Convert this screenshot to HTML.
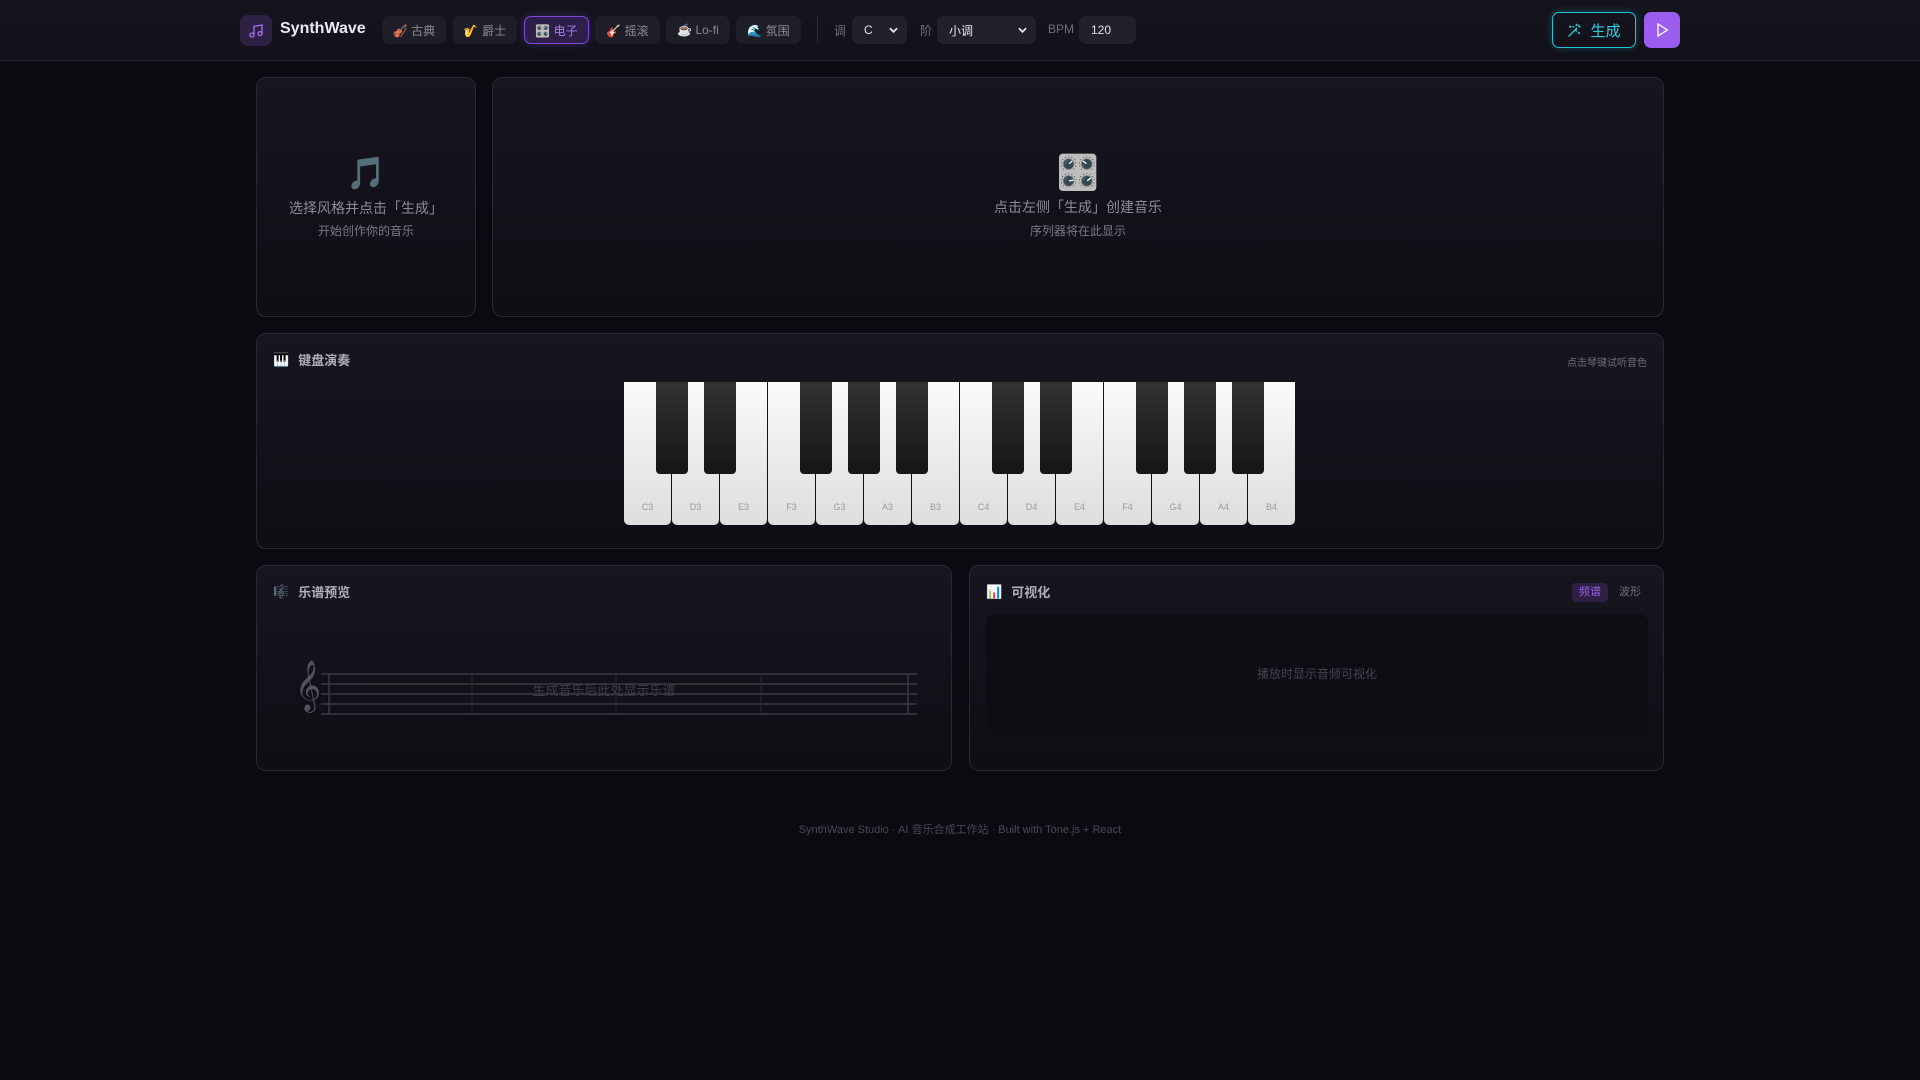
<!DOCTYPE html>
<html><head><meta charset="utf-8"><style>
*{box-sizing:border-box;margin:0;padding:0}
body{width:1920px;height:1080px;background:#0b0a10;font-family:"Liberation Sans","Noto Sans CJK SC",sans-serif;color:#9a98a8;position:relative;overflow:hidden}
.hdr{position:absolute;left:0;top:0;width:1920px;height:61px;background:linear-gradient(#16141e,#121019);border-bottom:1px solid #25232e}
.abs{position:absolute}
.logo{left:240px;top:15px;width:32px;height:31px;border-radius:8px;background:#2c2143;display:flex;align-items:center;justify-content:center}
.title{left:280px;top:20px;font-size:16px;font-weight:bold;color:#ecebf2}
.sb{top:16px;height:28px;border-radius:7px;background:#1f1d28;font-size:12px;display:flex;align-items:center;justify-content:center;color:#8b8998;gap:4px}
.sb.on{background:#2d1f4a;border:1px solid #7c4ad6;color:#a77cf2;box-shadow:0 0 8px rgba(124,74,214,.35)}
.lbl{top:22px;font-size:12px;color:#6f6d7c}
.sel{top:16px;height:28px;border-radius:7px;background:#22202b;font-size:12px;color:#e4e3ea;padding-left:12px;display:flex;align-items:center}
.chev{position:absolute;right:9px;top:10px}
.card{position:absolute;border:1px solid #2a2833;border-radius:10px;background:linear-gradient(#17151f,#0f0e14)}
.ct{position:absolute;left:16px;top:16px;font-size:13px;font-weight:bold;color:#b1afbd;display:flex;align-items:center;gap:9px}
.wk{position:absolute;top:0;width:47px;height:143px;background:linear-gradient(#fafafa,#dedede);border-radius:0 0 5px 5px;font-size:9px;color:#9a9aa2;text-align:center;padding-top:120px}
.bk{position:absolute;top:0;width:32px;height:92px;background:linear-gradient(#333,#151515);border-radius:0 0 4px 4px}
</style></head><body>
<div class="hdr">
<div class="abs logo"><svg width="16" height="16" viewBox="0 0 24 24" fill="none" stroke="#a56ef0" stroke-width="2" stroke-linecap="round"><path d="M9 18V5l12-2v13"/><circle cx="6" cy="18" r="3"/><circle cx="18" cy="16" r="3"/></svg></div>
<div class="abs title">SynthWave</div>
<div class="abs sb" style="left:382px;width:64px">🎻 古典</div>
<div class="abs sb" style="left:453px;width:64px">🎷 爵士</div>
<div class="abs sb on" style="left:524px;width:65px">🎛️ 电子</div>
<div class="abs sb" style="left:595px;width:65px">🎸 摇滚</div>
<div class="abs sb" style="left:666px;width:64px">☕ Lo-fi</div>
<div class="abs sb" style="left:736px;width:65px">🌊 氛围</div>
<div class="abs" style="left:817px;top:17px;width:1px;height:26px;background:#2c2a35"></div>
<div class="abs lbl" style="left:834px">调</div>
<div class="abs sel" style="left:852px;width:55px">C<svg class="chev" width="9" height="8" viewBox="0 0 10 8"><path d="M1 2l4 4 4-4" fill="none" stroke="#e4e3ea" stroke-width="2"/></svg></div>
<div class="abs lbl" style="left:920px">阶</div>
<div class="abs sel" style="left:937px;width:99px">小调<svg class="chev" width="9" height="8" viewBox="0 0 10 8"><path d="M1 2l4 4 4-4" fill="none" stroke="#e4e3ea" stroke-width="2"/></svg></div>
<div class="abs lbl" style="left:1048px">BPM</div>
<div class="abs sel" style="left:1079px;width:57px">120</div>
<div class="abs" style="left:1552px;top:12px;width:84px;height:36px;border:1.5px solid #1fc6d8;border-radius:7px;color:#2ad0e0;font-size:15px;display:flex;align-items:center;justify-content:center;gap:8px;box-shadow:0 0 8px rgba(31,198,216,.3)"><svg width="15" height="15" viewBox="0 0 24 24" fill="none" stroke="#2ad0e0" stroke-width="2" stroke-linecap="round"><path d="M3 21L15 9M13 11l2 2"/><path d="M15 4V2M15 10V8M11 6H9M21 6h-2M19 3l-1 1M5 7V5M4 6h2M19 17v-2M18 16h2"/></svg>生成</div>
<div class="abs" style="left:1644px;top:12px;width:36px;height:36px;background:#9b5cf0;border-radius:7px;display:flex;align-items:center;justify-content:center"><svg width="16" height="16" viewBox="0 0 24 24" fill="none" stroke="#fff" stroke-width="2"><path d="M6 3l14 9-14 9z"/></svg></div>
</div>

<div class="card" style="left:256px;top:77px;width:220px;height:240px;text-align:center">
<div style="margin-top:76px;font-size:32px;color:#5d7a88">🎵</div>
<div style="margin-top:6px;font-size:14px;color:#8d8b99">选择风格并点击「生成」</div>
<div style="margin-top:4px;font-size:12px;color:#7b7987">开始创作你的音乐</div>
</div>
<div class="card" style="left:492px;top:77px;width:1172px;height:240px;text-align:center">
<div style="margin-top:75px;font-size:34px">🎛️</div>
<div style="margin-top:4px;font-size:14px;color:#8d8b99">点击左侧「生成」创建音乐</div>
<div style="margin-top:5px;font-size:12px;color:#7b7987">序列器将在此显示</div>
</div>

<div class="card" style="left:256px;top:333px;width:1408px;height:216px">
<div class="ct"><span>🎹</span>键盘演奏</div>
<div style="position:absolute;right:16px;top:20px;font-size:10px;color:#6f6d7c">点击琴键试听音色</div>
<div style="position:absolute;left:367px;top:48px;width:672px;height:143px">
<div class="wk" style="left:0">C3</div><div class="wk" style="left:48px">D3</div><div class="wk" style="left:96px">E3</div><div class="wk" style="left:144px">F3</div><div class="wk" style="left:192px">G3</div><div class="wk" style="left:240px">A3</div><div class="wk" style="left:288px">B3</div><div class="wk" style="left:336px">C4</div><div class="wk" style="left:384px">D4</div><div class="wk" style="left:432px">E4</div><div class="wk" style="left:480px">F4</div><div class="wk" style="left:528px">G4</div><div class="wk" style="left:576px">A4</div><div class="wk" style="left:624px">B4</div>
<div class="bk" style="left:32px"></div><div class="bk" style="left:80px"></div><div class="bk" style="left:176px"></div><div class="bk" style="left:224px"></div><div class="bk" style="left:272px"></div><div class="bk" style="left:368px"></div><div class="bk" style="left:416px"></div><div class="bk" style="left:512px"></div><div class="bk" style="left:560px"></div><div class="bk" style="left:608px"></div>
</div></div>

<div class="card" style="left:256px;top:565px;width:696px;height:206px">
<div class="ct"><span>🎼</span>乐谱预览</div>
<div style="position:absolute;left:38px;top:94px;font-size:44px;color:#55535f;font-family:'DejaVu Sans',sans-serif">𝄞</div>
<svg style="position:absolute;left:64px;top:106px" width="600" height="44"><g stroke="#3a3844" stroke-width="1.5"><line x1="0" y1="2" x2="596" y2="2"/><line x1="0" y1="12" x2="596" y2="12"/><line x1="0" y1="22" x2="596" y2="22"/><line x1="0" y1="32" x2="596" y2="32"/><line x1="0" y1="42" x2="596" y2="42"/><line x1="8" y1="2" x2="8" y2="42"/><line x1="587" y1="2" x2="587" y2="42"/></g><g stroke="#2a2833"><line x1="151" y1="2" x2="151" y2="42"/><line x1="295" y1="2" x2="295" y2="42"/><line x1="440" y1="2" x2="440" y2="42"/></g></svg>
<div style="position:absolute;left:0;width:100%;top:114px;text-align:center;font-size:13px;color:#3f3d49">生成音乐后此处显示乐谱</div>
</div>

<div class="card" style="left:969px;top:565px;width:695px;height:206px">
<div class="ct"><span>📊</span>可视化</div>
<div style="position:absolute;left:602px;top:17px;width:36px;height:19px;border-radius:4px;background:#2e2044;color:#9a5fe6;font-size:11px;text-align:center;line-height:19px">频谱</div>
<div style="position:absolute;left:642px;top:17px;width:36px;height:19px;color:#6f6d7c;font-size:11px;text-align:center;line-height:19px">波形</div>
<div style="position:absolute;left:16px;top:48px;width:662px;height:120px;border-radius:8px;background:#0e0d13;text-align:center;line-height:120px;font-size:12px;color:#45434f">播放时显示音频可视化</div>
</div>

<div style="position:absolute;left:0;width:1920px;top:821px;text-align:center;font-size:11px;color:#4a4854">SynthWave Studio · AI 音乐合成工作站 · Built with Tone.js + React</div>
</body></html>
